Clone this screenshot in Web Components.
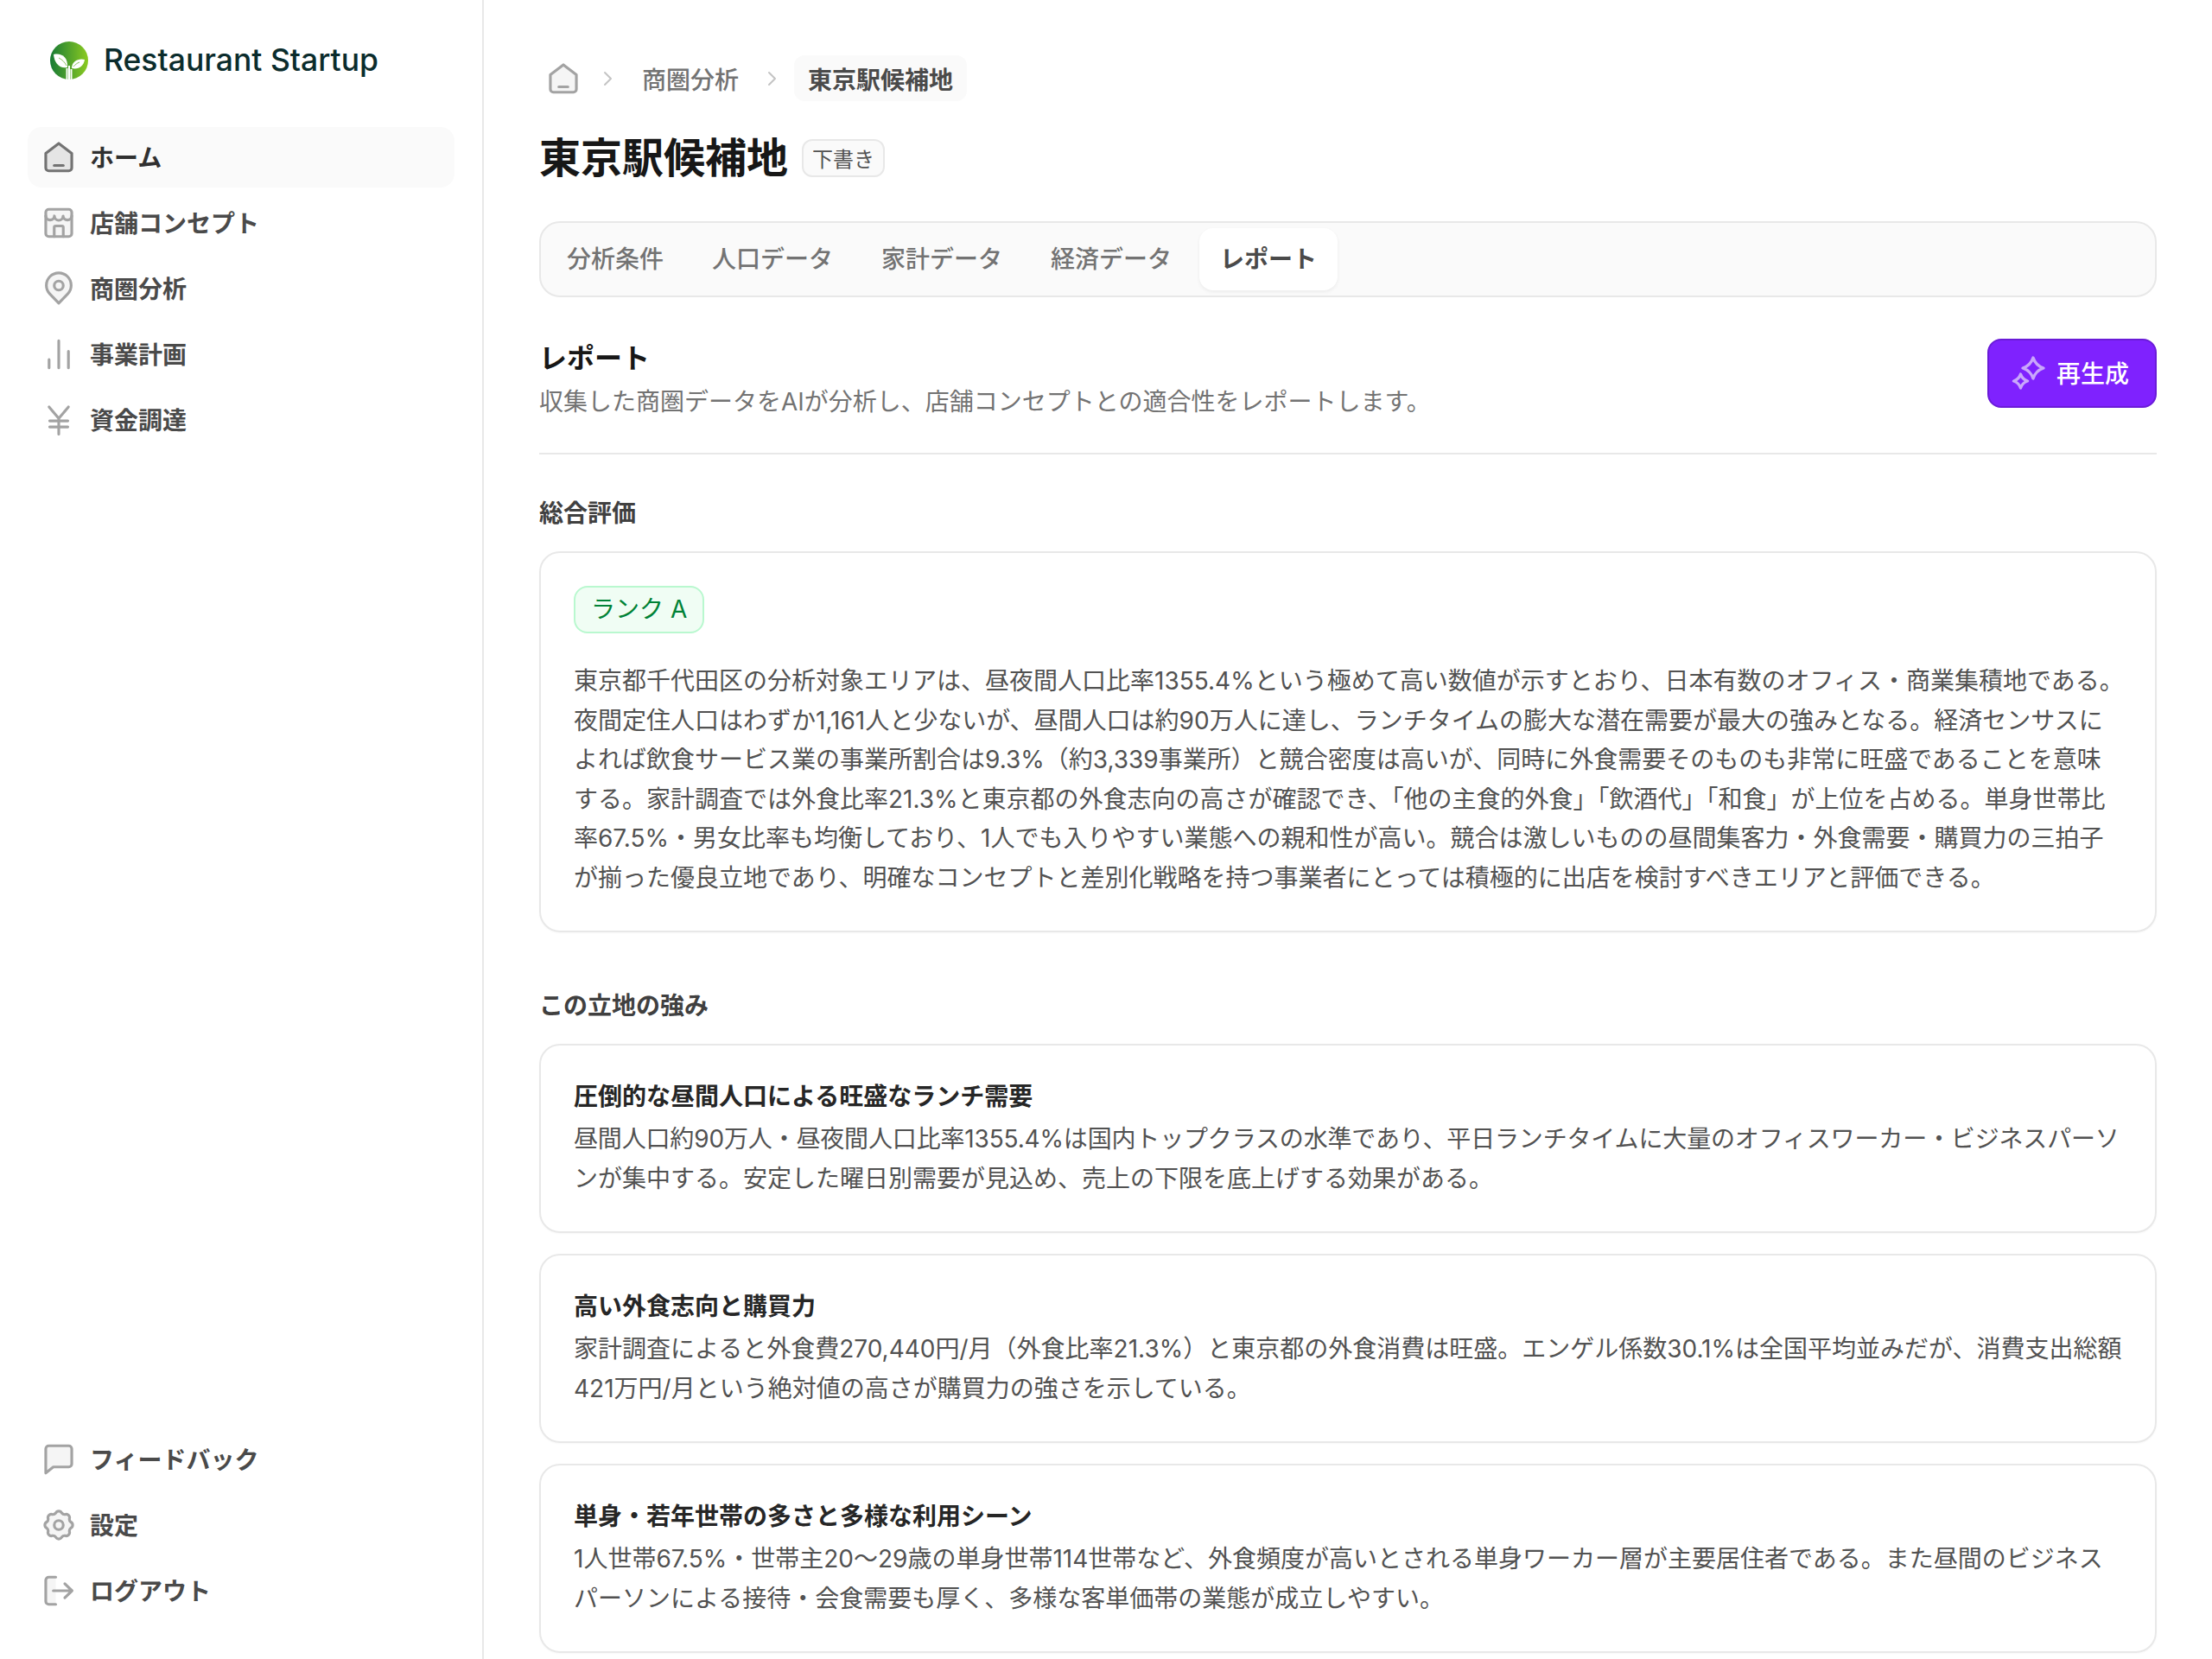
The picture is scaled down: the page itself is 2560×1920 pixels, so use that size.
<!DOCTYPE html>
<html lang="ja">
<head>
<meta charset="utf-8">
<title>Restaurant Startup</title>
<style>
  html, body { margin: 0; padding: 0; background: #fff; }
  body { font-family: Inter, "Noto Sans CJK JP", sans-serif; font-size: 28px; color: #404040; }
</style>
</head>
<body>
<rs-shell>
  <rs-sidebar slot="side">
    <rs-logo slot="top">Restaurant Startup</rs-logo>
    <rs-nav-item slot="top" icon="home" active>ホーム</rs-nav-item>
    <rs-nav-item slot="top" icon="store">店舗コンセプト</rs-nav-item>
    <rs-nav-item slot="top" icon="pin">商圏分析</rs-nav-item>
    <rs-nav-item slot="top" icon="chart">事業計画</rs-nav-item>
    <rs-nav-item slot="top" icon="yen">資金調達</rs-nav-item>
    <rs-nav-item slot="bottom" icon="chat">フィードバック</rs-nav-item>
    <rs-nav-item slot="bottom" icon="gear">設定</rs-nav-item>
    <rs-nav-item slot="bottom" icon="logout">ログアウト</rs-nav-item>
  </rs-sidebar>

  <rs-breadcrumb>
    <rs-crumb icon="home"></rs-crumb>
    <rs-crumb>商圏分析</rs-crumb>
    <rs-crumb current>東京駅候補地</rs-crumb>
  </rs-breadcrumb>

  <rs-title badge="下書き">東京駅候補地</rs-title>

  <rs-tabs>
    <rs-tab>分析条件</rs-tab>
    <rs-tab>人口データ</rs-tab>
    <rs-tab>家計データ</rs-tab>
    <rs-tab>経済データ</rs-tab>
    <rs-tab active>レポート</rs-tab>
  </rs-tabs>

  <rs-report-head heading="レポート" sub="収集した商圏データをAIが分析し、店舗コンセプトとの適合性をレポートします。">
    <rs-button>再生成</rs-button>
  </rs-report-head>

  <rs-section heading="総合評価">
    <rs-card>
      <rs-rank slot="top">ランク A</rs-rank>
      東京都千代田区の分析対象エリアは、昼夜間人口比率1355.4%という極めて高い数値が示すとおり、日本有数のオフィス・商業集積地である。<br>
      夜間定住人口はわずか1,161人と少ないが、昼間人口は約90万人に達し、ランチタイムの膨大な潜在需要が最大の強みとなる。経済センサスに<br>
      よれば飲食サービス業の事業所割合は9.3%（約3,339事業所）と競合密度は高いが、同時に外食需要そのものも非常に旺盛であることを意味<br>
      する。家計調査では外食比率21.3%と東京都の外食志向の高さが確認でき、「他の主食的外食」「飲酒代」「和食」が上位を占める。単身世帯比<br>
      率67.5%・男女比率も均衡しており、1人でも入りやすい業態への親和性が高い。競合は激しいものの昼間集客力・外食需要・購買力の三拍子<br>
      が揃った優良立地であり、明確なコンセプトと差別化戦略を持つ事業者にとっては積極的に出店を検討すべきエリアと評価できる。
    </rs-card>
  </rs-section>

  <rs-section heading="この立地の強み">
    <rs-card heading="圧倒的な昼間人口による旺盛なランチ需要">
      <span style="letter-spacing:-.16px">昼間人口約90万人・昼夜間人口比率1355.4%は国内トップクラスの水準であり、平日ランチタイムに大量のオフィスワーカー・ビジネスパーソ</span><br>
      ンが集中する。安定した曜日別需要が見込め、売上の下限を底上げする効果がある。
    </rs-card>
    <rs-card heading="高い外食志向と購買力">
      家計調査によると外食費270,440円/月（外食比率21.3%）と東京都の外食消費は旺盛。エンゲル係数30.1%は全国平均並みだが、消費支出総額<br>
      421万円/月という絶対値の高さが購買力の強さを示している。
    </rs-card>
    <rs-card heading="単身・若年世帯の多さと多様な利用シーン">
      1人世帯67.5%・世帯主20〜29歳の単身世帯114世帯など、外食頻度が高いとされる単身ワーカー層が主要居住者である。また昼間のビジネス<br>
      パーソンによる接待・会食需要も厚く、多様な客単価帯の業態が成立しやすい。
    </rs-card>
  </rs-section>
</rs-shell>

<script>
// eight lobed gear, easier to compute than to type out
function gearPath() {
  let d = '';
  const pt = (deg, r) => {
    const a = deg * Math.PI / 180;
    return (12 + r * Math.cos(a)).toFixed(2) + ' ' + (12 + r * Math.sin(a)).toFixed(2);
  };
  for (let i = 0; i < 8; i++) {
    const a = i * 45 - 90;
    d += (i ? 'A2.4 2.4 0 0 0 ' : 'M') + pt(a - 14, 8.2) + ' ';
    d += 'A2.2 2.2 0 0 1 ' + pt(a + 14, 8.2) + ' ';
  }
  return d + 'A2.4 2.4 0 0 0 ' + pt(-104, 8.2) + 'Z';
}

const ICONS = {
  home: '<path class="f" d="M12 2.800 20.600 9.400V19a2 2 0 0 1-2 2H5.400a2 2 0 0 1-2-2V9.400Z"/><path d="M9 17.400h6"/>',
  store: '<rect class="f" x="3.400" y="3" width="17.200" height="18" rx="2"/><path d="M3.400 7.400a2.870 2.870 0 0 0 5.730 0 2.870 2.870 0 0 0 5.740 0 2.870 2.870 0 0 0 5.730 0"/><path d="M9 21v-6a1 1 0 0 1 1-1h4a1 1 0 0 1 1 1v6"/>',
  pin: '<path class="f" d="M12 21.600 6.200 15.600a8.200 8.200 0 1 1 11.600 0Z"/><circle cx="12" cy="10" r="3"/>',
  chart: '<path d="M5.600 15.500V21M12 3v18M18.400 10v11"/>',
  yen: '<path d="M5.600 3.400 12 11l6.400-7.600M12 11v10.400M6 12.600h12M6 16.600h12"/>',
  chat: '<path class="f" d="M5.400 3h13.200a2 2 0 0 1 2 2v10a2 2 0 0 1-2 2H8.400l-5 4V5a2 2 0 0 1 2-2Z"/>',
  gear: '<path class="f" d="' + gearPath() + '"/><circle cx="12" cy="12" r="3"/>',
  logout: '<path class="f" stroke="none" d="M5.400 3H10v18H5.400a2 2 0 0 1-2-2V5a2 2 0 0 1 2-2Z"/><path d="M10 3H5.400a2 2 0 0 0-2 2v14a2 2 0 0 0 2 2H10"/><path d="M8.400 12h12.400M16 7.400l4.800 4.600-4.800 4.600"/>'
};

function icon(name, size) {
  return '<svg width="' + size + '" height="' + size + '" viewBox="0 0 24 24" fill="none" stroke="currentColor" ' +
    'stroke-width="1.8" stroke-linecap="round" stroke-linejoin="round">' + ICONS[name] + '</svg>';
}

// every element is the same shape: a style and some markup in an open shadow root
function component(tag, render) {
  customElements.define(tag, class extends HTMLElement {
    connectedCallback() {
      if (this.shadowRoot) return;
      const t = document.createElement('template');
      t.innerHTML = render(this);
      this.attachShadow({ mode: 'open' }).appendChild(t.content.cloneNode(true));
    }
  });
}

component('rs-shell', () => `
  <style>
    :host { display: flex; width: 2560px; height: 1920px; overflow: hidden; box-sizing: border-box; }
    main { flex: 1; min-width: 0; padding: 64px 64px 0; box-sizing: border-box; }
  </style>
  <slot name="side"></slot>
  <main><slot></slot></main>`);

component('rs-sidebar', () => `
  <style>
    :host { display: flex; flex-direction: column; justify-content: space-between; box-sizing: border-box;
      width: 560px; height: 1920px; flex: none; border-right: 2px solid #e8e8e8; padding: 0 32px 44px; }
    div { display: flex; flex-direction: column; gap: 6px; }
  </style>
  <div><slot name="top"></slot></div>
  <div><slot name="bottom"></slot></div>`);

component('rs-logo', () => `
  <style>
    :host { display: flex; align-items: center; gap: 18px; height: 141px; padding: 0 0 2px 26px; box-sizing: border-box;
      font-size: 35.500px; font-weight: 500; color: #0b2c2c; white-space: nowrap; }
    svg { flex: none; }
  </style>
  <svg width="44" height="44" viewBox="0 0 44 44">
    <defs><linearGradient id="g" x1="0" x2="1" y1="0" y2="0">
      <stop offset="0" stop-color="#177a35"/><stop offset="1" stop-color="#8ccb21"/>
    </linearGradient></defs>
    <circle cx="22" cy="22" r="22" fill="url(#g)"/>
    <path fill="#fff" d="M4 15c8-2 17 2 16 15-9 2-15-5-16-15Z"/>
    <path fill="#fff" d="M40 21c-7-2-15 2-15 10 8 2 14-3 15-10Z"/>
    <path fill="none" stroke="#6fae3a" stroke-width=".8" d="M10 19c4 2 7 5 9 9M34 24c-3 1-5 3-7 5"/>
    <path fill="none" stroke="#fff" stroke-width="2" d="M19.500 44V31M24.500 44V32M22 44V28"/>
  </svg>
  <span><slot></slot></span>`);

component('rs-nav-item', el => `
  <style>
    :host { display: flex; align-items: center; gap: 15px; height: 70px; padding: 0 15px; border-radius: 16px;
      font-weight: 600; color: #4a4a4a; white-space: nowrap; box-sizing: border-box; }
    :host([active]) { background: #fafafa; color: #303030; }
    svg { flex: none; color: #a3a3a3; }
    :host([active]) svg { color: #737373; }
    .f { fill: #f5f5f5; }
    :host([active]) .f { fill: #e5e5e5; }
    span { padding-bottom: 2px; }
  </style>
  ${icon(el.getAttribute('icon'), 42)}
  <span><slot></slot></span>`);

component('rs-breadcrumb', () => `
  <style>
    :host { display: flex; align-items: center; height: 53px; }
  </style>
  <slot></slot>`);

component('rs-crumb', el => `
  <style>
    :host { display: flex; align-items: center; font-weight: 500; color: #737373; white-space: nowrap; }
    .chev { flex: none; margin: 0 32px 0 0; color: #c4c4c4; }
    .body { display: flex; align-items: center; height: 53px; border-radius: 12px; }
    :host([current]) .body { background: #fafafa; color: #4a4a4a; padding: 0 16px; font-weight: 600; }
    :host([current]) .chev { margin-right: 18px; }
    .ico { margin-left: 7px; margin-right: 24px; color: #a3a3a3; display: flex; }
    .f { fill: #f5f5f5; }
    .txt { margin-right: 32px; }
    :host([current]) .txt { margin: 0; }
  </style>
  ${el.hasAttribute('icon')
    ? `<span class="ico">${icon(el.getAttribute('icon'), 42)}</span>`
    : `<svg class="chev" width="14" height="22" viewBox="0 0 14 22" fill="none" stroke="currentColor" stroke-width="2" stroke-linecap="round" stroke-linejoin="round"><path d="M3 4l7 7-7 7"/></svg>
       <span class="body"><span class="txt"><slot></slot></span></span>`}`);

component('rs-title', el => `
  <style>
    :host { display: flex; align-items: center; gap: 16px; height: 64px; margin-top: 34px; }
    h1 { margin: 0; font-size: 48px; line-height: 64px; font-weight: 700; color: #171717; white-space: nowrap; }
    span { display: flex; align-items: center; height: 44px; padding: 0 10px 2px; box-sizing: border-box; font-size: 24px;
      color: #525252; background: #fafafa; border: 2px solid #e8e8e8; border-radius: 12px; white-space: nowrap; }
  </style>
  <h1><slot></slot></h1>
  <span>${el.getAttribute('badge')}</span>`);

component('rs-tabs', () => `
  <style>
    :host { display: flex; gap: 8px; margin-top: 41px; padding: 6px; height: 88px; box-sizing: border-box;
      background: #fafafa; border: 2px solid #e8e8e8; border-radius: 24px; }
  </style>
  <slot></slot>`);

component('rs-tab', () => `
  <style>
    :host { display: flex; align-items: center; height: 72px; padding: 0 24px 4px; box-sizing: border-box;
      border-radius: 16px; font-weight: 500; color: #737373; white-space: nowrap; }
    :host([active]) { background: #fff; color: #4a4a4a; font-weight: 600; box-shadow: 0 2px 4px rgba(0,0,0,.06); }
  </style>
  <slot></slot>`);

component('rs-report-head', el => `
  <style>
    :host { display: flex; justify-content: space-between; align-items: flex-start; margin-top: 48px;
      padding-bottom: 36px; border-bottom: 2px solid #e8e8e8; }
    h2 { margin: 0; font-size: 32px; line-height: 46px; font-weight: 700; color: #171717; }
    p { margin: 4px 0 0; line-height: 46px; color: #737373; white-space: nowrap; }
  </style>
  <div>
    <h2>${el.getAttribute('heading')}</h2>
    <p>${el.getAttribute('sub')}</p>
  </div>
  <slot></slot>`);

component('rs-button', () => `
  <style>
    :host { display: flex; align-items: center; gap: 12px; height: 80px; width: 196px; box-sizing: border-box;
      padding: 0 26px 2px; background: #7f22fe; border: 2px solid #6a1bd8; border-radius: 16px; color: #fff;
      font-weight: 500; white-space: nowrap; }
    svg { flex: none; }
  </style>
  <svg width="40" height="40" viewBox="0 0 40 40" fill="none" stroke="#c9a7fb" stroke-width="3.400" stroke-linejoin="round">
    <path d="M25 3Q28 12 37 15 28 18 25 27 22 18 13 15 22 12 25 3Z"/>
    <path d="M10.500 22Q12.500 28 18.500 30 12.500 32 10.500 38 8.500 32 2.500 30 8.500 28 10.500 22Z"/>
  </svg>
  <slot></slot>`);

component('rs-section', el => `
  <style>
    :host { display: block; margin-top: 48px; }
    :host(:last-of-type) { margin-top: 65px; }
    h3 { margin: 0 0 24px; font-size: 28px; line-height: 40px; font-weight: 700; color: #404040; }
    div { display: flex; flex-direction: column; gap: 24px; }
  </style>
  <h3>${el.getAttribute('heading')}</h3>
  <div><slot></slot></div>`);

component('rs-card', el => `
  <style>
    :host { display: block; box-sizing: border-box; padding: 38px; border: 2px solid #e8e8e8; border-radius: 24px;
      line-height: 45.500px; color: #525252; white-space: nowrap; box-shadow: 0 1px 2px rgba(0,0,0,.03); }
    h4 { margin: 0 0 6px; font-size: 28px; line-height: 42px; font-weight: 700; color: #262626; }
    ::slotted(rs-rank) { margin-bottom: 33px; }
  </style>
  <slot name="top"></slot>
  ${el.hasAttribute('heading') ? `<h4>${el.getAttribute('heading')}</h4>` : ''}
  <slot></slot>`);

component('rs-rank', () => `
  <style>
    :host { display: block; width: max-content; height: 55px; line-height: 51px; padding: 0 18px; box-sizing: border-box;
      color: #008236; background: #f0fdf4; border: 2px solid #b9f8cf; border-radius: 16px; }
  </style>
  <slot></slot>`);
</script>
</body>
</html>
